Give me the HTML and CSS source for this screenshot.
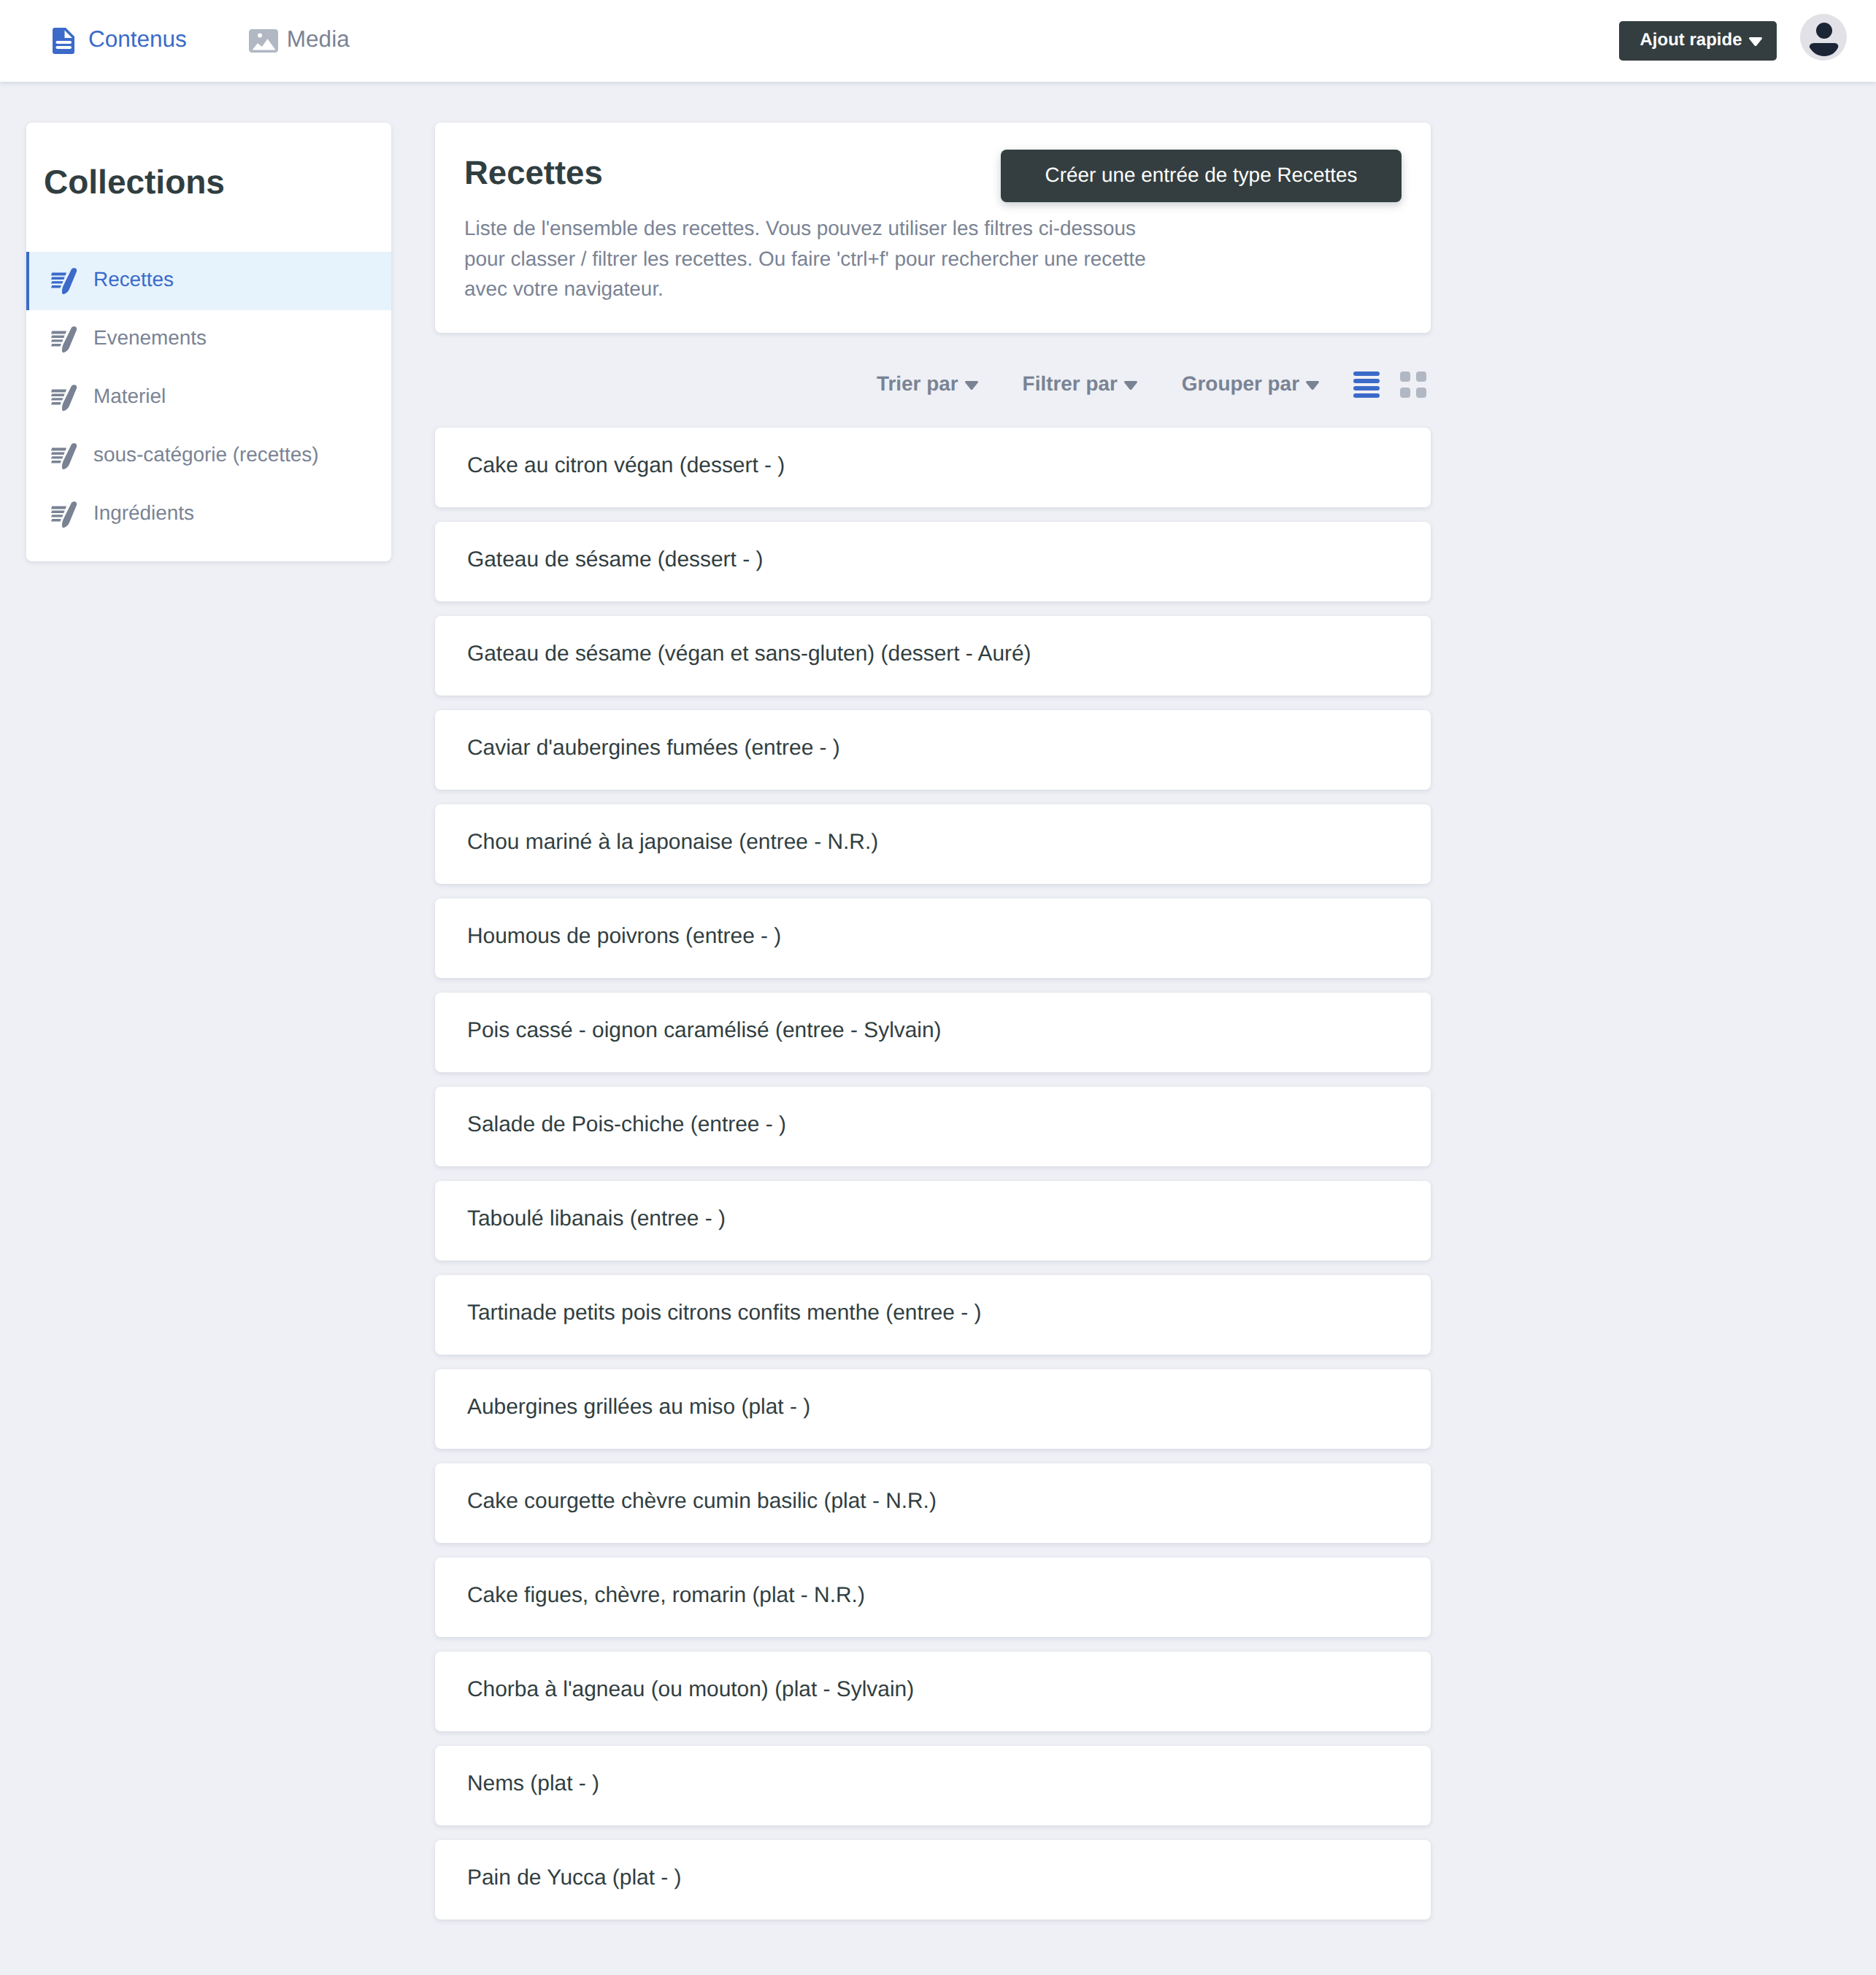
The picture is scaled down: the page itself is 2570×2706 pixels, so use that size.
FILE: index.html
```html
<!DOCTYPE html>
<html lang="fr">
<head>
<meta charset="utf-8">
<title>Collections - Recettes</title>
<link rel="stylesheet" href="styles.css">
</head>
<body>
<svg class="defs" width="0" height="0" aria-hidden="true">
  <symbol id="collection" viewBox="0 0 36 36">
    <path d="M1.2 6.6H21L19.6 10.6H0Z"/>
    <path d="M1.2 12.6H18.6L17.400 16H0Z"/>
    <path d="M1.2 18.2H16.400L15.200 21.600H0Z"/>
    <path d="M1.2 24H13.800L12.600 27.600H0Z"/>
    <path d="M27.800 1.900C29 .3 31.300-.3 33.200.5C35.100 1.400 35.600 3.400 34.900 5.200L24.900 29.200C23.800 31.900 21.200 34.800 17.700 36C16.200 36.400 15 35.200 15 33.700C14.900 30.800 15.300 27.800 16.500 25Z"/>
  </symbol>
  <symbol id="caret" viewBox="0 0 18 12">
    <path d="M1.500 0H16.500C17.800 0 18.400 1.500 17.500 2.500L10.300 11.400C9.600 12.200 8.400 12.200 7.700 11.400L.5 2.500C-.4 1.500 .2 0 1.500 0Z"/>
  </symbol>
</svg>

<header class="topbar">
  <nav class="topnav">
    <a class="topnav-link is-active">
      <svg class="icon-doc" viewBox="0 0 30 36"><path fill-rule="evenodd" d="M3 0H18L30 12V33C30 34.700 28.700 36 27 36H3C1.300 36 0 34.700 0 33V3C0 1.300 1.300 0 3 0ZM16.500 3.500V14H27ZM6.500 18C5.400 18 4.500 18.900 4.500 20C4.500 21.100 5.400 22 6.500 22H24C25.100 22 26 21.100 26 20C26 18.900 25.100 18 24 18ZM6.500 25C5.400 25 4.500 25.900 4.500 27C4.500 28.100 5.400 29 6.500 29H24C25.100 29 26 28.100 26 27C26 25.900 25.100 25 24 25Z"/></svg>
      <span>Contenus</span>
    </a>
    <a class="topnav-link">
      <svg class="icon-media" viewBox="0 0 40 32"><path fill-rule="evenodd" d="M4 0H36C38.200 0 40 1.800 40 4V28C40 30.200 38.200 32 36 32H4C1.800 32 0 30.200 0 28V4C0 1.800 1.800 0 4 0ZM18 8.500A3 3 0 1 0 12 8.500A3 3 0 0 0 18 8.500ZM4.400 28.400H36.500L25.500 13.300L17.800 24L12 19.300Z"/></svg>
      <span>Media</span>
    </a>
  </nav>
  <div class="topbar-actions">
    <button class="quick-add">Ajout rapide <svg class="caret caret-white"><use href="#caret"/></svg></button>
    <div class="avatar">
      <svg viewBox="0 0 64 64"><circle cx="33" cy="23" r="11"/><path d="M19 40H47C51 40 53 43 52 46C49 53 42 58 33 58C24 58 17 53 13 46C12 43 15 40 19 40Z"/></svg>
    </div>
  </div>
</header>

<div class="layout">
  <aside class="sidebar">
    <h2 class="sidebar-title">Collections</h2>
    <ul class="collection-list">
      <li class="collection-item is-active"><svg class="icon-collection"><use href="#collection"/></svg><span>Recettes</span></li>
      <li class="collection-item"><svg class="icon-collection"><use href="#collection"/></svg><span>Evenements</span></li>
      <li class="collection-item"><svg class="icon-collection"><use href="#collection"/></svg><span>Materiel</span></li>
      <li class="collection-item"><svg class="icon-collection"><use href="#collection"/></svg><span>sous-catégorie (recettes)</span></li>
      <li class="collection-item"><svg class="icon-collection"><use href="#collection"/></svg><span>Ingrédients</span></li>
    </ul>
  </aside>

  <main class="content">
    <section class="intro card">
      <div class="intro-head">
        <h1 class="intro-title">Recettes</h1>
        <button class="create-btn">Créer une entrée de type Recettes</button>
      </div>
      <p class="intro-text">Liste de l'ensemble des recettes. Vous pouvez utiliser les filtres ci-dessous pour classer / filtrer les recettes. Ou faire 'ctrl+f' pour rechercher une recette avec votre navigateur.</p>
    </section>

    <div class="toolbar">
      <button class="tool">Trier par<svg class="caret"><use href="#caret"/></svg></button>
      <button class="tool">Filtrer par<svg class="caret"><use href="#caret"/></svg></button>
      <button class="tool">Grouper par<svg class="caret"><use href="#caret"/></svg></button>
      <div class="view-switch">
        <svg class="view-icon view-list" viewBox="0 0 36 36"><rect y="0" width="36" height="6" rx="3"/><rect y="10" width="36" height="6" rx="3"/><rect y="20" width="36" height="6" rx="3"/><rect y="30" width="36" height="6" rx="3"/></svg>
        <svg class="view-icon view-grid" viewBox="0 0 36 36"><rect x="0" y="0" width="14" height="14" rx="4"/><rect x="22" y="0" width="14" height="14" rx="4"/><rect x="0" y="22" width="14" height="14" rx="4"/><rect x="22" y="22" width="14" height="14" rx="4"/></svg>
      </div>
    </div>

    <ul class="entries">
      <li class="entry card">Cake au citron végan (dessert - )</li>
      <li class="entry card">Gateau de sésame (dessert - )</li>
      <li class="entry card">Gateau de sésame (végan et sans-gluten) (dessert - Auré)</li>
      <li class="entry card">Caviar d'aubergines fumées (entree - )</li>
      <li class="entry card">Chou mariné à la japonaise (entree - N.R.)</li>
      <li class="entry card">Houmous de poivrons (entree - )</li>
      <li class="entry card">Pois cassé - oignon caramélisé (entree - Sylvain)</li>
      <li class="entry card">Salade de Pois-chiche (entree - )</li>
      <li class="entry card">Taboulé libanais (entree - )</li>
      <li class="entry card">Tartinade petits pois citrons confits menthe (entree - )</li>
      <li class="entry card">Aubergines grillées au miso (plat - )</li>
      <li class="entry card">Cake courgette chèvre cumin basilic (plat - N.R.)</li>
      <li class="entry card">Cake figues, chèvre, romarin (plat - N.R.)</li>
      <li class="entry card">Chorba à l'agneau (ou mouton) (plat - Sylvain)</li>
      <li class="entry card">Nems (plat - )</li>
      <li class="entry card">Pain de Yucca (plat - )</li>
    </ul>
  </main>
</div>
</body>
</html>
```

FILE: styles.css
```css
* { box-sizing: border-box; }
html, body { margin: 0; padding: 0; }
body {
  background: #eef0f5;
  color: #313e41;
  font-family: "Liberation Sans", Arial, sans-serif;
  font-size: 28px;
  min-height: 2706px;
  text-rendering: geometricPrecision;
}
.defs { position: absolute; }
ul { list-style: none; margin: 0; padding: 0; }
button { font-family: inherit; border: 0; cursor: pointer; text-rendering: inherit; }

.topbar {
  height: 112px;
  background: #fff;
  box-shadow: 0 2px 6px rgba(50, 60, 90, 0.14);
  display: flex;
  align-items: flex-start;
  justify-content: space-between;
  padding: 0 40px 0 72px;
}
.topnav { display: flex; gap: 85px; }
.topnav-link {
  display: flex;
  align-items: center;
  gap: 12px;
  height: 106px;
  font-size: 31.500px;
  color: #7a8394;
}
.topnav-link.is-active { color: #3b6ac9; gap: 19px; }
.icon-doc { width: 30px; height: 36px; fill: #3b6ac9; margin-top: 6px; }
.icon-media { width: 40px; height: 32px; fill: #b1b7c3; margin-top: 6px; }

.topbar-actions { display: flex; align-items: flex-start; gap: 32px; padding-top: 19px; }
.quick-add {
  margin-top: 10px;
  width: 216px;
  height: 54px;
  background: #343e40;
  color: #fff;
  font-size: 24px;
  font-weight: 700;
  border-radius: 5px;
  padding: 0 0 3px 8px;
  display: flex;
  align-items: center;
  justify-content: center;
  gap: 9px;
  white-space: nowrap;
}
.caret { display: block; width: 18px; height: 12px; fill: #7a8394; flex: none; }
.caret-white { fill: #fff; margin-top: 5px; }
.avatar { width: 64px; height: 64px; border-radius: 50%; background: #e1e1e7; }
.avatar svg { display: block; width: 64px; height: 64px; fill: #1c2535; }

.layout {
  display: flex;
  align-items: flex-start;
  gap: 60px;
  padding: 56px 0 0 36px;
}
.card { background: #fff; border-radius: 8px; box-shadow: 0 2px 6px rgba(50, 60, 90, 0.12); }

.sidebar {
  width: 500px;
  height: 601px;
  background: #fff;
  border-radius: 8px;
  box-shadow: 0 2px 6px rgba(50, 60, 90, 0.12);
}
.sidebar-title {
  margin: 0;
  padding: 0 0 0 24px;
  height: 177px;
  line-height: 162px;
  font-size: 46px;
  font-weight: 700;
}
.collection-item {
  height: 80px;
  display: flex;
  align-items: center;
  gap: 22px;
  padding-left: 34px;
  font-size: 27.900px;
  color: #7a8394;
}
.collection-item span { margin-bottom: 5px; }
.collection-item.is-active {
  background: #e6f3fd;
  color: #3b6ac9;
  border-left: 4px solid #3b6ac9;
  padding-left: 30px;
}
.icon-collection { width: 36px; height: 36px; fill: #7a8394; flex: none; }
.is-active .icon-collection { fill: #3b6ac9; }

.content { width: 1364px; }
.intro { height: 288px; padding: 37px 40px 0 40px; }
.intro-head { display: flex; justify-content: space-between; align-items: flex-start; }
.intro-title { margin: 0; font-size: 45.500px; font-weight: 700; line-height: 64px; }
.create-btn {
  width: 549px;
  height: 72px;
  padding-bottom: 3px;
  background: #343e40;
  color: #fff;
  font-size: 27.900px;
  border-radius: 8px;
  box-shadow: 0 4px 12px rgba(40, 50, 60, 0.25);
}
.intro-text {
  margin: 15px 0 0;
  width: 960px;
  font-size: 27.900px;
  line-height: 41.500px;
  color: #7a8394;
}
.toolbar {
  height: 130px;
  display: flex;
  align-items: center;
  justify-content: flex-end;
  padding: 12px 6px 0 0;
}
.tool {
  background: none;
  padding: 0 0 3px;
  margin-right: 61px;
  font-size: 27.900px;
  font-weight: 700;
  color: #7a8394;
  display: flex;
  align-items: center;
  gap: 9px;
}
.tool .caret { margin-top: 5px; }
.tool:nth-of-type(3) { margin-right: 47px; }
.view-switch { display: flex; gap: 28px; }
.view-icon { width: 36px; height: 36px; display: block; }
.view-list { fill: #3b6ac9; }
.view-grid { fill: #b1b7c3; }

.entries { display: flex; flex-direction: column; gap: 20px; }
.entry {
  height: 109px;
  padding: 0 44px 6px;
  display: flex;
  align-items: center;
  font-size: 29.900px;
}
```
